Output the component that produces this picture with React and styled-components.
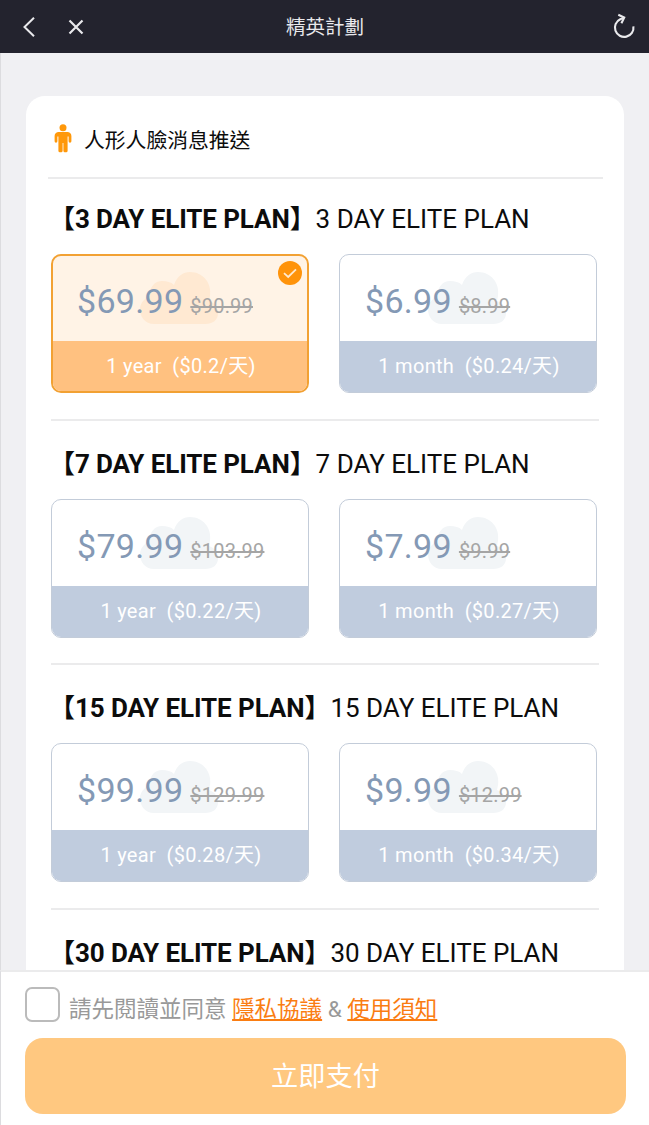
import React from "react";
import styled, { createGlobalStyle, css } from "styled-components";

const GlobalStyle = createGlobalStyle`
  *, *::before, *::after { box-sizing: border-box; }
  body {
    margin: 0;
    background: #f0f0f3;
    font-family: Roboto, "Noto Sans CJK TC", sans-serif;
    color: #0c0c0c;
  }
`;

const Screen = styled.div`
  display: flex;
  flex-direction: column;
  height: 1125px;
  overflow: hidden;
`;

const Header = styled.header`
  display: grid;
  grid-template-columns: 1fr auto 1fr;
  align-items: center;
  flex: none;
  height: 53px;
  padding: 0 12px 0 20px;
  background: #23232e;
  color: #e9e9ec;
`;

const HeaderActions = styled.div`
  display: flex;
  align-items: center;
  gap: 28px;
`;

const HeaderTitle = styled.h1`
  margin: 2px 0 0 -7px;
  font-size: 19.5px;
  line-height: 28px;
  font-weight: 400;
`;

const IconButton = styled.button`
  display: flex;
  padding: 0;
  border: 0;
  background: none;
  color: inherit;
  justify-self: ${(p) => p.$end ? "end" : "start"};
`;

const Content = styled.main`
  flex: 1;
  min-height: 0;
  overflow: hidden;
  padding: 43px 25px 0 25px;
  border-left: 1px solid #dcdcdf;
`;

const Panel = styled.div`
  height: 100%;
  padding: 0 21px 0 22px;
  background: #fff;
  border-radius: 19px 19px 0 0;
`;

const Feature = styled.div`
  display: flex;
  align-items: center;
  gap: 12px;
  height: 83px;
  padding: 4px 0 0 6px;
  border-bottom: 2px solid #ebebec;
  font-size: 20.8px;

  svg { margin-top: -1px; }
`;

const PlanSection = styled.section`
  height: 240px;
  margin: 0 4px 0 3px;
  padding-top: 23px;

  & + & {
    height: 244.4px;
    padding-top: 26px;
    border-top: 2px solid #ebebec;
  }
`;

const PlanTitle = styled.h2`
  margin: 0 0 17px;
  height: 35px;
  line-height: 35px;
  font-size: 26px;
  font-weight: 400;
  white-space: nowrap;

  strong {
    margin: 0 0 0 -2px;
    font-weight: 700;
    letter-spacing: -0.1px;
  }
`;

const OfferRow = styled.div`
  display: grid;
  grid-template-columns: 258px 258px;
  gap: 30px;
`;

const OfferCard = styled.div`
  position: relative;
  display: flex;
  flex-direction: column;
  height: 139px;
  overflow: hidden;
  border-radius: 10px;
  border: 1px solid #c3ccd9;
  background: #fff;
  ${(p) => p.$selected && css`
    border: 2px solid #f2a133;
    background: #fff3e6;
  `}
`;

const OfferPrice = styled.div`
  position: relative;
  display: flex;
  align-items: baseline;
  flex: 1;
  padding: ${(p) => p.$selected ? "24px 0 0 24px" : "25px 0 0 25px"};
`;

const Price = styled.span`
  position: relative;
  font-size: 34px;
  line-height: 42px;
  letter-spacing: 0.3px;
  color: #8499b5;
`;

const OldPrice = styled.s`
  position: relative;
  margin-left: 7px;
  font-size: 20px;
  letter-spacing: 0.2px;
  color: #a5a5a5;
`;

const CloudBackdrop = styled.svg`
  position: absolute;
  left: ${(p) => p.$selected ? "87px" : "88px"};
  top: ${(p) => p.$selected ? "15px" : "16px"};
  fill: ${(p) => p.$selected ? "#ffe9d2" : "#f2f5f7"};
`;

const Term = styled.div`
  display: flex;
  justify-content: center;
  flex: none;
  height: ${(p) => p.$selected ? "50px" : "51px"};
  line-height: 51px;
  padding-left: 2px;
  background: ${(p) => p.$selected ? "#ffc180" : "#c0ccde"};
  color: #fff;
  font-size: 20px;
  letter-spacing: 0.3px;
  white-space: pre;
`;

const SelectedBadge = styled.svg`
  position: absolute;
  top: 5px;
  right: 5px;
`;

const Footer = styled.footer`
  flex: none;
  height: 155px;
  padding: 15px 23px 0 24px;
  border-top: 2px solid #ebebec;
  border-left: 1px solid #dcdcdf;
  background: #fff;
`;

const Consent = styled.div`
  display: flex;
  align-items: center;
  height: 35px;
  font-size: 22.5px;
  color: #999;
  white-space: pre;
`;

const Checkbox = styled.span`
  width: 35px;
  height: 35px;
  margin-right: 9px;
  border: 2px solid #bbb;
  border-radius: 7px;
`;

const ConsentText = styled.span`
  padding-top: 5px;
`;

const PolicyLink = styled.a`
  color: #fa7d12;
  text-decoration: underline;
  text-decoration-thickness: 2px;
  text-underline-offset: 2px;
  text-decoration-skip-ink: none;
`;

const PayButton = styled.button`
  display: block;
  width: 601px;
  height: 76px;
  margin-top: 16px;
  padding: 0 0 4px;
  border: 0;
  border-radius: 18px;
  background: #ffc880;
  color: #fff;
  font: inherit;
  font-size: 27.2px;
`;

const BackIcon = () => (
  <svg width="18" height="22" viewBox="0 0 18 22" fill="none" stroke="currentColor" strokeWidth="2">
    <path d="M14 1.8 4.5 11 14 20.2" />
  </svg>
);

const CloseIcon = () => (
  <svg width="20" height="20" viewBox="0 0 20 20" fill="none" stroke="currentColor" strokeWidth="2.2">
    <path d="M3.5 3.5 16.5 16.5M16.5 3.5 3.5 16.5" />
  </svg>
);

const ReloadIcon = () => (
  <svg width="26" height="28" viewBox="0 0 26 28" fill="none" stroke="currentColor" strokeWidth="2.1">
    <path d="M22.4 13.3A9.3 9.3 0 1 1 9.2 6.2L12.8 4.8" />
    <path d="M7.3 1.8 13.2 4.6 10.4 10.2" />
  </svg>
);

const PersonIcon = () => (
  <svg width="18" height="29" viewBox="0 0 18 29" fill="#ff980a">
    <circle cx="9" cy="3.7" r="3.5" />
    <path d="M5 8H13A4 4 0 0 1 17.4 12V17.3A1.4 1.4 0 0 1 14.6 17.3V12.5H13.6V27A1.5 1.5 0 0 1 12 28.3H11A1.5 1.5 0 0 1 9.4 27V19H8.6V27A1.5 1.5 0 0 1 7 28.3H6A1.5 1.5 0 0 1 4.4 27V12.5H3.4V17.3A1.4 1.4 0 0 1 .6 17.3V12A4 4 0 0 1 5 8Z" />
  </svg>
);

const Cloud = ({ selected }) => (
  <CloudBackdrop $selected={selected} width="78" height="54" viewBox="0 0 78 54">
    <path d="M14 53C5 53 0 46 0 38C0 32 5 27 10 25C9 16 15 10 22 10C27 10 31 11 34 14C37 5 43 1 50 1C63 1 72 12 70 25L69 30C75 32 78 37 78 42C78 49 73 53 65 53Z" />
  </CloudBackdrop>
);

const plans = [
  { days: 3, offers: [
    { price: "$69.99", old: "$90.99", term: "1 year", daily: "$0.2", selected: true },
    { price: "$6.99", old: "$8.99", term: "1 month", daily: "$0.24" },
  ] },
  { days: 7, offers: [
    { price: "$79.99", old: "$103.99", term: "1 year", daily: "$0.22" },
    { price: "$7.99", old: "$9.99", term: "1 month", daily: "$0.27" },
  ] },
  { days: 15, offers: [
    { price: "$99.99", old: "$129.99", term: "1 year", daily: "$0.28" },
    { price: "$9.99", old: "$12.99", term: "1 month", daily: "$0.34" },
  ] },
  { days: 30, offers: [] },
];

const Offer = ({ price, old, term, daily, selected }) => (
  <OfferCard $selected={selected}>
    <OfferPrice $selected={selected}>
      <Cloud selected={selected} />
      <Price>{price}</Price>
      <OldPrice>{old}</OldPrice>
    </OfferPrice>
    <Term $selected={selected}>{`${term}  (${daily}/天)`}</Term>
    {selected && (
      <SelectedBadge width="24" height="24" viewBox="0 0 24 24" fill="none">
        <circle cx="12" cy="12" r="12" fill="#ff930a" />
        <path d="M6 12.2 10.2 16 18 8.3" stroke="#ffe9cf" strokeWidth="1.8" />
      </SelectedBadge>
    )}
  </OfferCard>
);

export default function App() {
  return (
    <Screen>
      <GlobalStyle />
      <Header>
        <HeaderActions>
          <IconButton aria-label="返回"><BackIcon /></IconButton>
          <IconButton aria-label="關閉"><CloseIcon /></IconButton>
        </HeaderActions>
        <HeaderTitle>精英計劃</HeaderTitle>
        <IconButton $end aria-label="重新整理"><ReloadIcon /></IconButton>
      </Header>
      <Content>
        <Panel>
          <Feature><PersonIcon /><span>人形人臉消息推送</span></Feature>
          {plans.map(({ days, offers }) => (
            <PlanSection key={days}>
              <PlanTitle>
                <strong>{`【${days} DAY ELITE PLAN】`}</strong>
                {`${days} DAY ELITE PLAN`}
              </PlanTitle>
              <OfferRow>
                {offers.map((offer) => <Offer key={offer.term} {...offer} />)}
              </OfferRow>
            </PlanSection>
          ))}
        </Panel>
      </Content>
      <Footer>
        <Consent>
          <Checkbox role="checkbox" aria-checked="false" />
          <ConsentText>
            {"請先閱讀並同意 "}<PolicyLink>隱私協議</PolicyLink>{" & "}<PolicyLink>使用須知</PolicyLink>
          </ConsentText>
        </Consent>
        <PayButton>立即支付</PayButton>
      </Footer>
    </Screen>
  );
}
